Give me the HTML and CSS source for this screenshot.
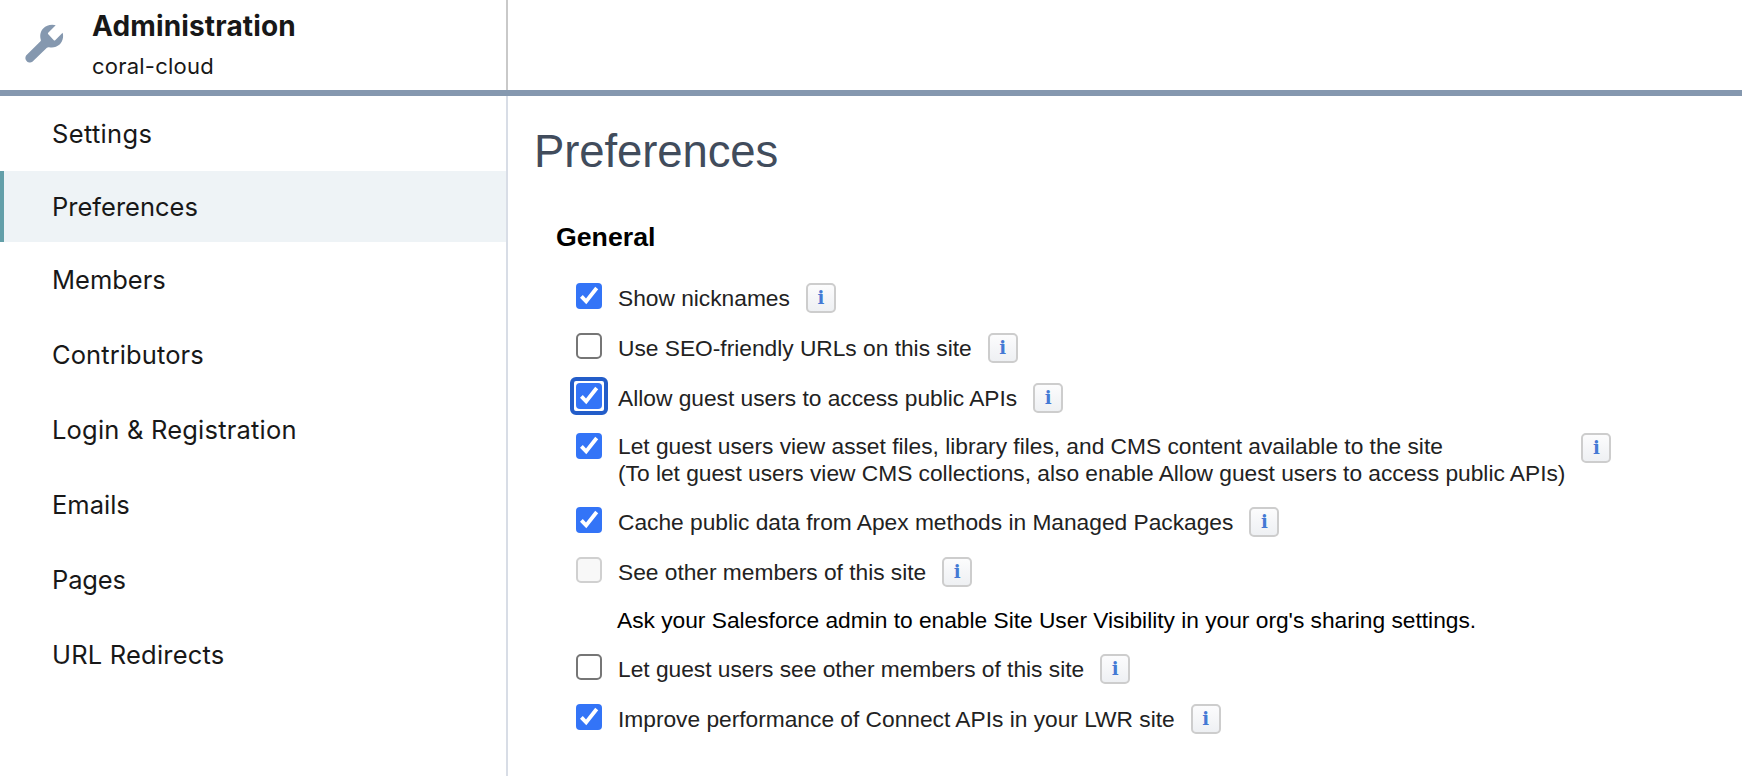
FILE: index.html
```html
<!DOCTYPE html>
<html lang="en">
<head>
<meta charset="utf-8">
<title>Administration</title>
<link rel="stylesheet" href="styles.css">
</head>
<body>
<header class="topbar">
  <div class="brand">
    <svg class="wrench" width="40" height="40" viewBox="0 0 40 40" aria-hidden="true">
      <path d="M31.7 1.3L24.2 8.8Q23.6 9.5 24.3 10.2L29.8 16.2Q30.5 16.9 31.2 16.2L38.6 8.7Q39.3 10.6 39 13.5C38.3 20 32 25 25 23.2Q23.8 22.9 22.9 23.8L8.4 37.8C5 40.5-.6 36 2.1 31.5L16.5 17.3Q17.2 16.5 16.7 15.4C14.6 8.2 19.5.7 28.3.7Q30.5.7 31.7 1.3Z"/>
    </svg>
    <div>
      <div class="brand-title">Administration</div>
      <div class="brand-site">coral-cloud</div>
    </div>
  </div>
</header>
<div class="layout">
  <nav class="sidebar">
    <a class="nav-item loose">Settings</a>
    <a class="nav-item active">Preferences</a>
    <a class="nav-item">Members</a>
    <a class="nav-item medium">Contributors</a>
    <a class="nav-item wide">Login &amp; Registration</a>
    <a class="nav-item">Emails</a>
    <a class="nav-item tight">Pages</a>
    <a class="nav-item wide">URL Redirects</a>
  </nav>
  <main class="content">
    <h1 class="page-title">Preferences</h1>
    <h2 class="section-title">General</h2>
    <div class="options">
      <div class="option"><span class="box checked"><svg class="tick" viewBox="0 0 26 26"><path d="M4 14.8L6.8 12L10 15.6L19.2 3.8L22.2 6.2L10.3 21.2Z"/></svg></span><span class="label">Show nicknames</span><span class="info">i</span></div>
      <div class="option"><span class="box"></span><span class="label">Use SEO-friendly URLs on this site</span><span class="info">i</span></div>
      <div class="option"><span class="box checked focused"><svg class="tick" viewBox="0 0 26 26"><path d="M4 14.8L6.8 12L10 15.6L19.2 3.8L22.2 6.2L10.3 21.2Z"/></svg></span><span class="label">Allow guest users to access public APIs</span><span class="info">i</span></div>
      <div class="option tall"><span class="box checked"><svg class="tick" viewBox="0 0 26 26"><path d="M4 14.8L6.8 12L10 15.6L19.2 3.8L22.2 6.2L10.3 21.2Z"/></svg></span><span class="label">Let guest users view asset files, library files, and CMS content available to the site<br>(To let guest users view CMS collections, also enable Allow guest users to access public APIs)</span><span class="info">i</span></div>
      <div class="option"><span class="box checked"><svg class="tick" viewBox="0 0 26 26"><path d="M4 14.8L6.8 12L10 15.6L19.2 3.8L22.2 6.2L10.3 21.2Z"/></svg></span><span class="label">Cache public data from Apex methods in Managed Packages</span><span class="info">i</span></div>
      <div class="option"><span class="box disabled"></span><span class="label">See other members of this site</span><span class="info">i</span></div>
      <p class="note">Ask your Salesforce admin to enable Site User Visibility in your org's sharing settings.</p>
      <div class="option"><span class="box"></span><span class="label">Let guest users see other members of this site</span><span class="info">i</span></div>
      <div class="option"><span class="box checked"><svg class="tick" viewBox="0 0 26 26"><path d="M4 14.8L6.8 12L10 15.6L19.2 3.8L22.2 6.2L10.3 21.2Z"/></svg></span><span class="label">Improve performance of Connect APIs in your LWR site</span><span class="info">i</span></div>
    </div>
  </main>
</div>
</body>
</html>
```
FILE: styles.css
```css
* {
  box-sizing: border-box;
}

body {
  margin: 0;
  height: 776px;
  display: flex;
  flex-direction: column;
  overflow: hidden;
  background: #fff;
  color: #181818;
  font-family: "Liberation Sans", Arial, sans-serif;
}

.topbar {
  height: 96px;
  flex: none;
  display: flex;
  border-bottom: 6px solid #8598af;
}

.brand {
  width: 508px;
  display: flex;
  gap: 28px;
  padding: 7px 0 0 24px;
  border-right: 2px solid #c9c9c9;
  font-family: Inter, sans-serif;
}

.wrench {
  margin-top: 17px;
  fill: #8598af;
}

.brand-title {
  font-size: 28px;
  line-height: 38px;
  font-weight: 700;
  letter-spacing: 0.15px;
}

.brand-site {
  font-size: 22px;
  line-height: 28px;
  margin-top: 7px;
  letter-spacing: 0.22px;
}

.layout {
  flex: 1;
  display: flex;
}

.sidebar {
  width: 508px;
  border-right: 2px solid #d8dde6;
  font-family: Inter, sans-serif;
}

.nav-item {
  display: flex;
  align-items: center;
  height: 75px;
  padding-left: 52px;
  font-size: 25.5px;
}

.nav-item.active {
  height: 71px;
  padding-left: 48px;
  border-left: 4px solid #639fa9;
  background: #eef3f6;
}

.nav-item.tight {
  letter-spacing: -0.15px;
}

.nav-item.medium {
  letter-spacing: 0.1px;
}

.nav-item.wide {
  letter-spacing: 0.2px;
}

.nav-item.loose {
  letter-spacing: 0.33px;
}

.content {
  flex: 1;
  padding: 30px 0 0 68px;
}

.page-title {
  margin: 0 0 0 -42px;
  color: #414c5c;
  font-size: 45.5px;
  line-height: 52px;
  font-weight: 400;
  letter-spacing: -0.1px;
}

.section-title {
  margin: 43px 0 0 -20px;
  color: #000;
  font-size: 26.7px;
  line-height: 32px;
}

.options {
  display: flex;
  flex-direction: column;
  gap: 20px;
  margin-top: 30px;
  font-size: 22.75px;
  line-height: 27px;
  letter-spacing: -0.01px;
}

.option {
  display: flex;
  height: 30px;
}

.option.tall {
  height: 54px;
}

.box {
  position: relative;
  width: 26px;
  height: 26px;
  margin-right: 16px;
  border: 2px solid #767676;
  border-radius: 5px;
}

.box.checked {
  border: 0;
  background: #3374f7;
  border-radius: 4px;
}

/* Focus ring, drawn around the box with a white gap */
.box.focused::after {
  content: "";
  position: absolute;
  inset: -6px;
  border: 4px solid #235dc9;
  border-radius: 6px;
}

.box.disabled {
  border-color: #d0d0d0;
  background: #f8f8f8;
}

.tick {
  display: block;
  fill: #fff;
}

.label {
  padding-top: 2px;
  color: #222;
  white-space: nowrap;
}

.tall .label {
  padding-top: 0;
}

.info {
  width: 30px;
  height: 30px;
  margin-left: 16px;
  border: 2px solid #cdcdcd;
  border-radius: 5px;
  background: linear-gradient(#fcfcfd, #eef0f3);
  color: #4479d4;
  font: bold 18px/26px "DejaVu Serif", serif;
  text-align: center;
}

.note {
  margin: 0 0 0 41px;
  color: #000;
}
```
